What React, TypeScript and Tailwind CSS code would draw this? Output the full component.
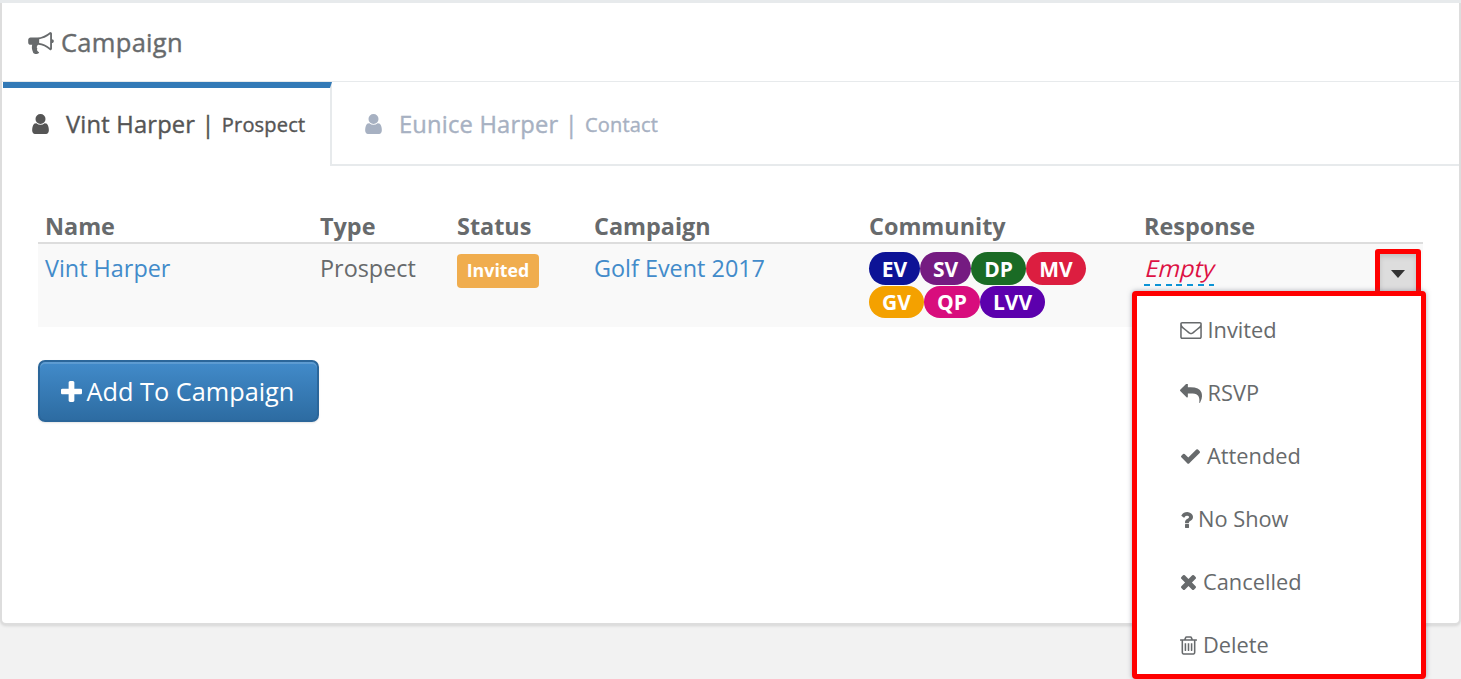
type IconName = 'bullhorn' | 'user' | 'plus' | 'envelope' | 'reply' | 'check' | 'question' | 'times' | 'trash';

// Font Awesome 4 glyphs, each one cropped to its own box
const ICONS: Record<IconName, { box: string; d: string }> = {
  bullhorn: {
    box: '0 128 1792 1540',
    d: 'M1664 640q53 0 90.5 37.5t37.5 90.5-37.5 90.5-90.5 37.5v384q0 52-38 90t-90 38q-417-347-812-380-58 19-91 66t-31 100.5 40 92.5q-20 33-23 65.5t6 58 33.5 55 48 50 61.5 50.5q-29 58-111.5 83t-168.5 11.5-132-55.5q-7-23-29.5-87.5t-32-94.5-23-89-15-101 3.5-98.5 22-110.5h-122q-66 0-113-47t-47-113v-192q0-66 47-113t113-47h480q435 0 896-384 52 0 90 38t38 90v384zm-128 604v-954q-394 302-768 343v270q377 42 768 341z',
  },
  user: {
    box: '256 128 1280 1536',
    d: 'M1536 1399q0 109-62.5 187t-150.5 78h-854q-88 0-150.5-78t-62.5-187q0-85 8.5-160.5t31.5-152 58.5-131 94-89 134.5-34.5q131 128 313 128t313-128q76 0 134.5 34.5t94 89 58.5 131 31.5 152 8.5 160.5zm-256-887q0 159-112.5 271.5t-271.5 112.5-271.5-112.5-112.5-271.5 112.5-271.5 271.5-112.5 271.5 112.5 112.5 271.5z',
  },
  plus: {
    box: '192 128 1408 1408',
    d: 'M1600 736v192q0 40-28 68t-68 28h-416v416q0 40-28 68t-68 28h-192q-40 0-68-28t-28-68v-416h-416q-40 0-68-28t-28-68v-192q0-40 28-68t68-28h416v-416q0-40 28-68t68-28h192q40 0 68 28t28 68v416h416q40 0 68 28t28 68z',
  },
  envelope: {
    box: '0 256 1792 1408',
    d: 'M1664 1504v-768q-32 36-69 66-268 206-426 338-51 43-83 67t-86.5 48.5-102.5 24.5h-2q-48 0-102.5-24.5t-86.5-48.5-83-67q-158-132-426-338-37-30-69-66v768q0 13 9.5 22.5t22.5 9.5h1472q13 0 22.5-9.5t9.5-22.5zm0-1051v-24.5l-.5-13-3-12.5-5.5-9-9-7.5-14-2.5h-1472q-13 0-22.5 9.5t-9.5 22.5q0 168 147 284 193 152 401 317 6 5 35 29.5t46 37.5 44.5 31.5 50.5 27.5 43 9h2q20 0 43-9t50.5-27.5 44.5-31.5 46-37.5 35-29.5q208-165 401-317 54-43 100.5-115.5t46.5-131.5zm128-37v1088q0 66-47 113t-113 47h-1472q-66 0-113-47t-47-113v-1088q0-66 47-113t113-47h1472q66 0 113 47t47 113z',
  },
  reply: {
    box: '0 128 1792 1536',
    d: 'M1792 1120q0 166-127 451-3 7-10.5 24t-13.5 30-13 22q-12 17-28 17-15 0-23.5-10t-8.5-25q0-9 2.5-26.5t2.5-23.5q5-68 5-123 0-101-17.5-181t-48.5-138.5-80-101-105.5-69.5-133-42.5-154-21.5-175.5-6h-224v256q0 26-19 45t-45 19-45-19l-512-512q-19-19-19-45t19-45l512-512q19-19 45-19t45 19 19 45v256h224q713 0 875 403 53 134 53 333z',
  },
  check: {
    box: '121 334 1550 1188',
    d: 'M1671 566q0 40-28 68l-724 724-136 136q-28 28-68 28t-68-28l-136-136-362-362q-28-28-28-68t28-68l136-136q28-28 68-28t68 28l294 295 656-657q28-28 68-28t68 28l136 136q28 28 28 68z',
  },
  question: {
    box: '448 256 956 1280',
    d: 'M1088 1256v240q0 16-12 28t-28 12h-240q-16 0-28-12t-12-28v-240q0-16 12-28t28-12h240q16 0 28 12t12 28zm316-600q0 54-15.5 101t-35 76.5-55 59.5-57.5 43.5-61 35.5q-41 23-68.5 65t-27.5 67q0 17-12 32.5t-28 15.5h-240q-15 0-25.5-18.5t-10.5-37.5v-45q0-83 65-156.5t143-108.5q59-27 84-56t25-76q0-42-46.5-74t-107.5-32q-65 0-108 29-35 25-107 115-13 16-31 16-12 0-25-8l-164-125q-13-10-15.5-25t5.5-28q160-266 464-266 80 0 161 31t146 83 106 127.5 41 158.5z',
  },
  times: {
    box: '302 366 1188 1188',
    d: 'M1490 1322q0 40-28 68l-136 136q-28 28-68 28t-68-28l-294-294-294 294q-28 28-68 28t-68-28l-136-136q-28-28-28-68t28-68l294-294-294-294q-28-28-28-68t28-68l136-136q28-28 68-28t68 28l294 294 294-294q28-28 68-28t68 28l136 136q28 28 28 68t-28 68l-294 294 294 294q28 28 28 68z',
  },
  trash: {
    box: '192 128 1408 1536',
    d: 'M704 736v576q0 14-9 23t-23 9h-64q-14 0-23-9t-9-23v-576q0-14 9-23t23-9h64q14 0 23 9t9 23zm256 0v576q0 14-9 23t-23 9h-64q-14 0-23-9t-9-23v-576q0-14 9-23t23-9h64q14 0 23 9t9 23zm256 0v576q0 14-9 23t-23 9h-64q-14 0-23-9t-9-23v-576q0-14 9-23t23-9h64q14 0 23 9t9 23zm128 724v-948h-896v948q0 22 7 40.5t14.5 27 10.5 8.5h832q3 0 10.5-8.5t14.5-27 7-40.5zm-672-1076h448l-48-117q-7-9-17-11h-317q-10 2-17 11zm928 32v64q0 14-9 23t-23 9h-96v948q0 83-47 143.5t-113 60.5h-832q-66 0-113-58.5t-47-141.5v-952h-96q-14 0-23-9t-9-23v-64q0-14 9-23t23-9h309l70-167q15-37 54-63t79-26h320q40 0 79 26t54 63l70 167h309q14 0 23 9t9 23z',
  },
};

function Icon({ name, className }: { name: IconName; className: string }) {
  return (
    <svg viewBox={ICONS[name].box} className={`shrink-0 fill-current ${className}`} aria-hidden="true">
      <path d={ICONS[name].d} />
    </svg>
  );
}

const columns = ['Name', 'Type', 'Status', 'Campaign', 'Community', 'Response'];

const communities = [
  { code: 'EV', style: 'w-[51px] bg-[#0d1396]' },
  { code: 'SV', style: 'w-[51px] bg-[#751b81]' },
  { code: 'DP', style: 'w-[55px] bg-[#1a6b25]' },
  { code: 'MV', style: 'w-[60px] bg-[#dc1e40]' },
  { code: 'GV', style: 'w-[55px] bg-[#f4a100]' },
  { code: 'QP', style: 'w-[56px] bg-[#d80d7d]' },
  { code: 'LVV', style: 'w-[65px] bg-[#5c00ad]' },
];

const actions: { label: string; icon: IconName; size: string }[] = [
  { label: 'Invited', icon: 'envelope', size: 'w-[22px] h-[17px] mr-[5.5px]' },
  { label: 'RSVP', icon: 'reply', size: 'w-[22px] h-[19px] mr-[5.5px]' },
  { label: 'Attended', icon: 'check', size: 'w-[19px] h-[15px] ml-[1px] mr-[7px]' },
  { label: 'No Show', icon: 'question', size: 'w-[12px] h-[16px] ml-[1px] mr-[5px]' },
  { label: 'Cancelled', icon: 'times', size: 'w-[15px] h-[15px] ml-[1px] mr-[7px]' },
  { label: 'Delete', icon: 'trash', size: 'w-[17px] h-[19px] mr-[6px]' },
];

export default function App() {
  return (
    <div className="h-[679px] w-[1461px] overflow-hidden border-t-[3px] border-[#e7eaec] bg-[#f2f2f2] font-['Open_Sans',sans-serif] text-[23.4px] leading-[34px] text-[#676a6c]">
      <div className="relative h-[622px] rounded-b-[6px] border-x-2 border-b-2 border-[#dddddd] bg-white shadow-[0_1px_3px_rgba(0,0,0,0.12)]">
        <header className="flex h-[79px] items-center border-b border-[#e7eaec] pl-[26px] pt-[2px]">
          <Icon name="bullhorn" className="h-[22px] w-[26px]" />
          <h5 className="ml-[7px] pb-[2px] text-[25.5px] tracking-[0.3px] [-webkit-text-stroke:0.4px]">Campaign</h5>
        </header>

        <Tabs />

        <main className="px-9 pt-[43px]">
          <div className="grid h-[35px] w-[1385px] grid-cols-[275px_137px_137px_275px_275px_286px] border-b-2 border-[#dddddd] font-bold">
            {columns.map((c) => (
              <div key={c} className="pl-[7px]">{c}</div>
            ))}
          </div>
          <div className="grid h-[83px] w-[1385px] grid-cols-[275px_137px_137px_275px_275px_286px] bg-[#f9f9f9] pt-[7px]">
            <a className="pl-[7px] text-[#428bca]">Vint Harper</a>
            <span className="pl-[7px]">Prospect</span>
            <div className="pl-[7px] pt-[3px]">
              <span className="flex h-[34px] w-[82px] items-center justify-center rounded-[4px] bg-[#f0ad4e] pb-[2px] text-[17.8px] font-bold text-white">
                Invited
              </span>
            </div>
            <a className="pl-[7px] text-[#428bca]">Golf Event 2017</a>
            <div className="flex flex-wrap content-start gap-y-[1px] pl-[7px] pr-[40px] pt-[1.4px]">
              {communities.map((c) => (
                <span
                  key={c.code}
                  className={`flex h-[32.5px] items-center justify-center rounded-full text-[21px] font-bold text-white ${c.style}`}
                >
                  {c.code}
                </span>
              ))}
            </div>
            <div className="flex items-start justify-between pl-[7px] pr-[2px]">
              <a className="h-[35px] w-[70px] bg-[repeating-linear-gradient(90deg,#0d94d6_0_6px,transparent_6px_10.8px)] bg-[length:100%_2px] bg-bottom bg-no-repeat text-[#dd1144]">
                <span className="inline-block origin-[0_26px] -skew-x-[14deg]">Empty</span>
              </a>
              <button className="-mt-[2px] flex h-[47px] w-[46px] items-center justify-center rounded-[3px] border-[5px] border-[#ff0000] bg-[#dddddd] pt-[2px] shadow-[inset_0_3px_5px_rgba(0,0,0,0.125)]">
                <svg viewBox="0 0 14 8" className="h-[8px] w-[14px] fill-[#333333]" aria-hidden="true">
                  <path d="M0 0h14L7 8z" />
                </svg>
              </button>
            </div>
          </div>

          <button className="-ml-[0.5px] mt-[33px] flex h-[62px] w-[281px] items-center rounded-[7px] border-2 border-[#2b669a] bg-linear-to-b from-[#428bca] to-[#2d6ca2] pl-[21px] text-[25.3px] text-white shadow-[inset_0_2px_0_rgba(255,255,255,0.15),0_1px_2px_rgba(0,0,0,0.1)]">
            <Icon name="plus" className="h-[21px] w-[21px]" />
            <span className="ml-[5px]">Add To Campaign</span>
          </button>
        </main>

        {/* Row actions menu */}
        <ul className="absolute left-[1130px] top-[288px] h-[388px] w-[294px] rounded-[4px] border-[5px] border-[#ff0000] bg-white pl-[43px] pt-[3px] text-[21.8px] shadow-[0_0_5px_rgba(86,96,117,0.5)]">
          {actions.map((a) => (
            <li key={a.label} className="flex h-[63px] items-center">
              <Icon name={a.icon} className={a.size} />
              <span className="pb-[2px]">{a.label}</span>
            </li>
          ))}
        </ul>
      </div>
    </div>
  );
}

function Tabs() {
  return (
    <nav className="flex h-[84px] pl-[1px] tracking-[0.2px] [-webkit-text-stroke:0.4px]">
      <div className="flex w-[329px] items-center border-r-2 border-t-[6px] border-r-[#e7eaec] border-t-[#337ab7] pb-[6px] pl-[29px] text-[#555555]">
        <Icon name="user" className="h-[20px] w-[17px]" />
        <span className="ml-[17px] text-[23.7px]">Vint Harper |</span>
        <span className="ml-[7px] pt-[2px] text-[20px]">Prospect</span>
      </div>
      <div className="flex flex-1 items-center border-b-2 border-[#e7eaec] pl-[33px] pt-[2px] text-[#a7b1c2]">
        <Icon name="user" className="h-[20px] w-[17px]" />
        <span className="ml-[17px] text-[23.7px]">Eunice Harper |</span>
        <span className="ml-[7px] pt-[2px] text-[20px]">Contact</span>
      </div>
    </nav>
  );
}
